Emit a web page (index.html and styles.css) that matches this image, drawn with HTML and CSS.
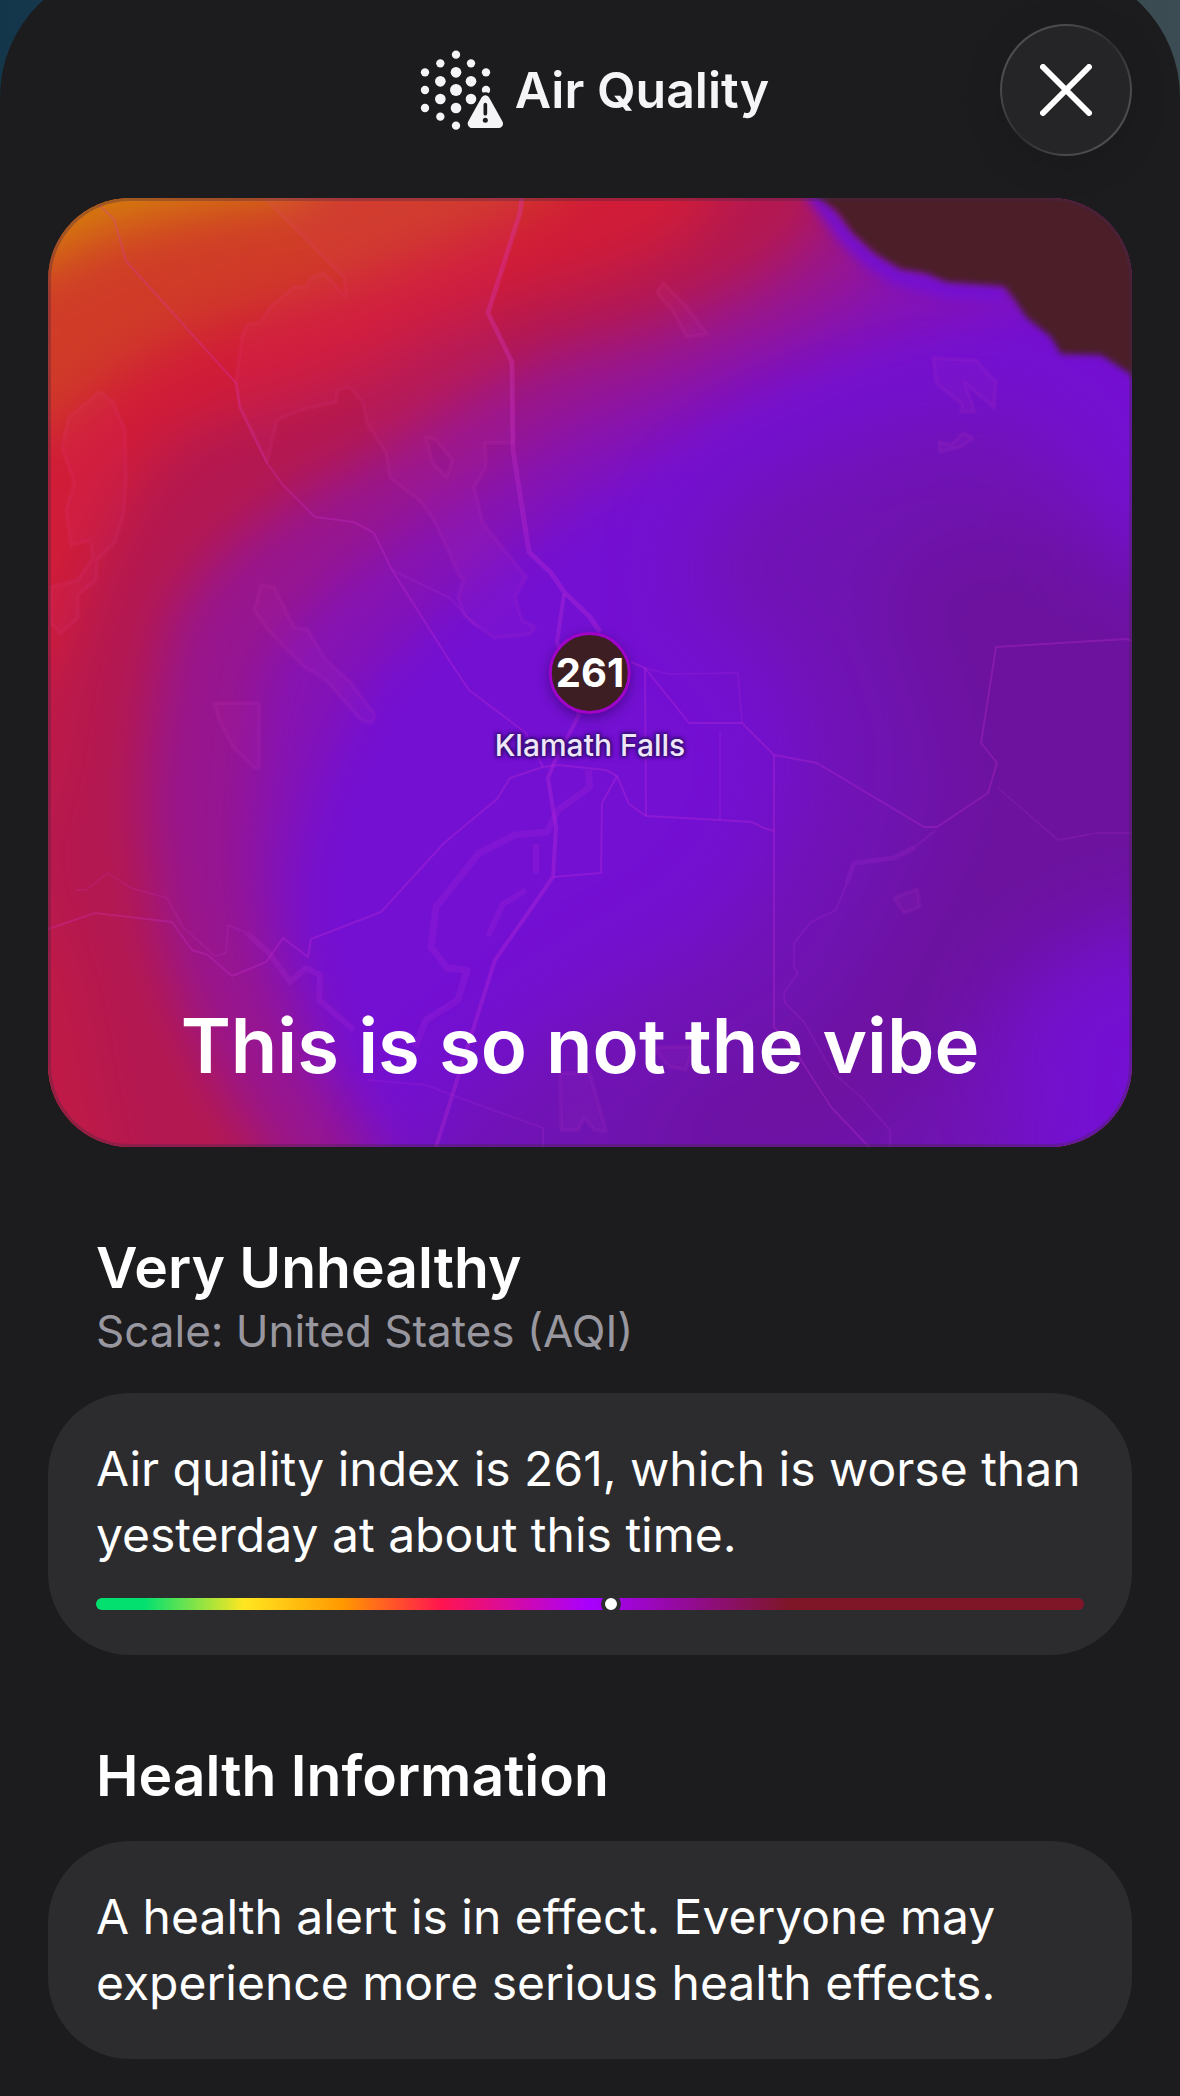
FILE: index.html
```html
<!DOCTYPE html>
<html lang="en">
<head>
  <meta charset="UTF-8">
  <meta name="viewport" content="width=device-width, initial-scale=1">
  <title>Air Quality</title>
  <link rel="stylesheet" href="styles.css">
</head>
<body>

<main class="sheet">
  <header class="sheet-header">
    <h1 class="title">
      <svg class="title-icon" viewBox="54 54 258 246" aria-hidden="true">
        <g fill="#f5f5f7">
          <circle cx="165" cy="71" r="12.5"/>
          <circle cx="118" cy="97" r="12.5"/>
          <circle cx="210" cy="97" r="12.5"/>
          <circle cx="72" cy="124" r="12.5"/>
          <circle cx="165" cy="124" r="16"/>
          <circle cx="255" cy="124" r="12.5"/>
          <circle cx="118" cy="151" r="16"/>
          <circle cx="210" cy="151" r="16"/>
          <circle cx="72" cy="177" r="12.5"/>
          <circle cx="165" cy="177" r="18"/>
          <circle cx="255" cy="177" r="12.5"/>
          <circle cx="118" cy="204" r="16"/>
          <circle cx="210" cy="204" r="16"/>
          <circle cx="72" cy="231" r="12.5"/>
          <circle cx="165" cy="231" r="16"/>
          <circle cx="118" cy="257" r="12.5"/>
          <circle cx="165" cy="284" r="12.5"/>
        </g>
        <path d="M253 206 L212 279 H294 Z" fill="#1c1c1e" stroke="#1c1c1e" stroke-width="44" stroke-linejoin="round"/>
        <path d="M253 206 L213 278 H293 Z" fill="#f5f5f7" stroke="#f5f5f7" stroke-width="26" stroke-linejoin="round"/>
        <path d="M253 221 V248" stroke="#1c1c1e" stroke-width="11" stroke-linecap="round"/>
        <circle cx="253" cy="268" r="7.5" fill="#1c1c1e"/>
      </svg>
      Air Quality
    </h1>
    <button class="close-btn" type="button" aria-label="Close">
      <svg viewBox="0 0 52 52" aria-hidden="true">
        <path d="M3 3 L49 49 M49 3 L3 49"/>
      </svg>
    </button>
  </header>

  <!-- Map with the AQI overlay -->
  <figure class="map">
    <svg class="map-art" viewBox="0 0 1084 949" preserveAspectRatio="xMidYMid slice" aria-hidden="true">
      <defs>
        <filter id="soft" filterUnits="userSpaceOnUse" x="-200" y="-200" width="1484" height="1349" color-interpolation-filters="sRGB">
          <feGaussianBlur stdDeviation="26"/>
        </filter>
        <filter id="softer" filterUnits="userSpaceOnUse" x="-200" y="-200" width="1484" height="1349" color-interpolation-filters="sRGB">
          <feGaussianBlur stdDeviation="42"/>
        </filter>
        <filter id="edge" filterUnits="userSpaceOnUse" x="-200" y="-200" width="1484" height="1349" color-interpolation-filters="sRGB">
          <feGaussianBlur stdDeviation="3"/>
        </filter>
        <filter id="fringe" filterUnits="userSpaceOnUse" x="-200" y="-200" width="1484" height="1349" color-interpolation-filters="sRGB">
          <feGaussianBlur stdDeviation="6"/>
        </filter>
      </defs>

      <!-- Overlay bands, from unhealthy to hazardous -->
      <rect width="1084" height="949" fill="#d03c28"/>
      <g filter="url(#soft)">
        <path fill="#d47c0c" d="M-150 100 L0 66 L50 36 L150 12 L260 -6 L290 -150 H-150Z"/>
        <path fill="#d01c38" d="M-150 290 L0 232 L70 176 L140 135 L213 112 L300 88 L410 44 L500 0 L640 -150 H1200 V1100 H-150Z"/>
        <path fill="#c01a46" d="M-150 1100 V500 L0 470 L35 380 L70 300 L110 245 L190 205 L213 240 V1100Z"/>
        <path fill="#b41850" d="M80 1100 L60 949 L45 880 L30 790 L-5 700 L-10 640 L15 560 L25 480 L50 380 L90 300 L130 248 L213 210 L303 178 L410 122 L500 92 L570 72 L640 38 L680 -20 L730 -150 H1200 V1100Z"/>
        <path fill="#97158e" d="M265 1100 L215 949 L175 890 L140 820 L112 740 L98 640 L98 570 L110 480 L125 415 L175 352 L252 297 L340 250 L435 190 L508 156 L600 132 L705 86 L762 45 L795 -20 L835 -150 H1200 V1100Z"/>
        <path fill="#8513b4" d="M350 1100 L312 949 L260 870 L212 755 L198 665 L205 575 L216 465 L275 395 L362 328 L440 280 L520 228 L630 182 L750 128 L815 92 L855 20 L905 -150 H1200 V1100Z"/>
        <path fill="#7410d2" d="M390 1100 L345 949 L290 870 L246 755 L246 670 L270 580 L315 485 L368 430 L445 368 L520 308 L620 248 L716 192 L840 142 L970 104 L1200 70 V1100Z"/>
      </g>
      <g filter="url(#softer)">
        <path fill="#7013b3" d="M670 310 L756 260 L880 215 L971 215 L1030 275 L1080 370 L1250 440 V715 L1078 735 L1000 770 L960 840 L970 900 L970 1100 H330 L385 930 L456 865 L560 800 L680 735 L730 660 L760 560 L720 450 L640 400Z"/>
        <path fill="#6c129e" d="M830 390 L900 330 L1000 340 L1250 440 V700 L1040 720 L930 800 L880 880 L800 960 L560 980 L640 900 L780 830 L860 700 L900 600 L870 480Z"/>
      </g>
      <path d="M762 -10 L780 14 L798 38 L820 60 L848 78 L900 92 L956 96" fill="none" stroke="#7410d2" stroke-width="16" filter="url(#fringe)"/>
      <path fill="#4b1e28" filter="url(#edge)" d="M760 -40 L771 0 L788 12 L806 36 L828 56 L853 71 L878 75 L899 84 L956 88 L967 102 L978 119 L1003 139 L1013 156 L1053 157 L1084 177 L1140 205 V-40Z"/>

      <!-- Lakes, forest and fields -->
      <g fill="#f050c8" fill-opacity=".05" stroke="#f050c8" stroke-opacity=".07" stroke-width="4" stroke-linejoin="round">
        <path fill-rule="evenodd" d="M217 0 L235 19 L249 32 L296 80 L298 99 L276 75 L263 80 L258 89 L246 89 L222 109 L213 124 L199 127 L194 139 L188 182 L192 209 L219 264 L229 222 L253 212 L288 204 L290 192 L301 189 L315 205 L319 225 L338 255 L342 280 L371 302 L385 320 L410 375 L415 382 L410 400 L417 419 L446 440 L483 436 L487 429 L474 422 L467 399 L478 379 L435 325 L426 289 L438 269 L437 245 L465 245 L464 164 L440 115 L472 15 L474 0Z M378 239 L388 242 L404 262 L399 279 L385 265Z"/>
        <path d="M51 194 L65 204 L77 232 L78 279 L76 315 L67 344 L49 362 L48 382 L30 397 L30 420 L13 435 L3 425 L3 389 L30 382 L45 359 L42 342 L23 347 L18 312 L26 285 L14 249 L21 219Z"/>
        <path d="M213 387 L226 389 L246 429 L260 432 L278 462 L303 485 L327 517 L324 525 L313 522 L278 482 L256 469 L220 432 L206 412Z"/>
        <path d="M166 505 H211 V569 L206 570 L185 549 L171 522Z"/>
        <path d="M615 85 L637 107 L659 136 L639 139 L624 112 L609 95Z"/>
        <path d="M885 160 L928 162 L948 184 L946 210 L917 185 L927 214 L913 214 L914 206 L888 185Z"/>
        <path d="M891 244 L903 247 L915 235 L925 240 L913 249 L892 254Z"/>
        <path d="M846 700 L869 691 L872 709 L856 715Z"/>
        <path d="M512 875 L513 932 H530 L536 920 L546 932 L558 933 L542 875Z"/>
        <path d="M605 849 H645 L638 872 L620 868Z"/>
      </g>

      <!-- Rivers -->
      <g fill="none" stroke="#d040e0" stroke-opacity=".13" stroke-linejoin="round">
        <path stroke-width="7" d="M540 572 L542 589 L510 612 L499 634 L467 637 L431 655 L388 709 L383 749 L399 770 L419 772 L410 802 L378 822 L367 849"/>
        <path stroke-width="6" d="M488 646 V676 M478 692 L455 706 L440 738"/>
        <path stroke-width="2" d="M28 692 L38 692 L60 675 L83 690 L119 700 L135 729 L167 758 L178 755 L180 727 L199 735"/>
        <path stroke-width="6" d="M199 735 L221 755 L242 784 L258 770 L272 777 L271 802 L306 832"/>
        <path stroke-width="5" d="M867 649 L846 660 L806 665 L799 685"/>
        <path stroke-width="2" d="M888 632 L867 649 M799 685 L788 712 L763 724 L746 745 L746 769 L750 775 L736 795 L737 805 L756 824 L785 875 L813 899 L842 932 V949"/>
        <path stroke-width="2" d="M949 589 L1010 642 L1049 635 L1084 635 M344 372 L402 400 L430 430 M320 882 L378 887 L420 903 L495 930 V949"/>
        <path stroke-width="2" d="M597 470 L620 476 L690 475 L694 525 M672 533 V623"/>
      </g>

      <!-- Roads -->
      <g fill="none" stroke="#d838d8" stroke-opacity=".24" stroke-linejoin="round">
        <path stroke-width="5" d="M474 0 L472 15 L440 115 L464 164 L465 252 L481 354 L503 375 L517 395 L542 419 L552 434"/>
        <path stroke-width="4" d="M516 396 L509 444 L531 517 L506 565 L500 580 L508 629 L505 679 L447 762 L388 949"/>
        <path stroke-width="2" d="M51 7 L66 21 L78 63 L188 185 L192 210 L219 265 L235 287 L267 319 L306 324 L326 335 L344 372 L403 465 L421 492 L478 535 L495 569"/>
        <path stroke-width="2" d="M0 731 L47 715 L124 724 L144 752 L160 757 L184 778 L218 764 L235 740 L260 759 L263 741 L333 714 L396 645 L449 601 L462 580 L495 569 L510 567 L558 572 L569 578 L581 606 L598 618 L672 622 L704 624 L716 630 L726 633"/>
        <path stroke-width="2" d="M583 464 L597 470 L641 525 L694 525 L726 557 L769 565 L876 629 L889 629 L940 595 L949 565 L933 545 L946 462 L948 449 L1078 441 L1084 443"/>
        <path stroke-width="2" d="M726 557 V829 L751 859 L783 909 L821 949 M597 470 L598 618 M569 578 L554 605 L553 675 L505 679"/>
      </g>
    </svg>

    <div class="pin">
      <span class="pin-value">261</span>
      <span class="pin-label">Klamath Falls</span>
    </div>

    <figcaption class="caption">This is so not the vibe</figcaption>
  </figure>

  <section class="section">
    <div class="section-head">
      <h2>Very Unhealthy</h2>
      <p class="scale">Scale: United States (AQI)</p>
    </div>
    <div class="card">
      <p>Air quality index is 261, which is worse than yesterday at about this time.</p>
      <div class="aqi-bar" role="meter" aria-label="Air quality index" aria-valuemin="0" aria-valuemax="500" aria-valuenow="261">
        <span class="aqi-dot" style="left: 52.1%"></span>
      </div>
    </div>
  </section>

  <section class="section">
    <div class="section-head">
      <h2>Health Information</h2>
    </div>
    <div class="card">
      <p>A health alert is in effect. Everyone may experience more serious health effects.</p>
    </div>
  </section>
</main>

</body>
</html>
```
FILE: styles.css
```css
* {
  box-sizing: border-box;
}

body {
  margin: 0;
  overflow-x: hidden;
  background: linear-gradient(90deg, #14364b, #3b4c52);
  color: #fff;
  font-family: Inter, "Liberation Sans", sans-serif;
}

h1, h2, p, figure {
  margin: 0;
}

/* The sheet slides up past the top edge of the window */
.sheet {
  min-height: calc(100vh + 33px);
  margin-top: -33px;
  padding: 57px 48px 38px;
  border-radius: 130px 130px 0 0;
  background-color: #1c1c1e;
}

.sheet-header {
  display: grid;
  grid-template-columns: 1fr auto 1fr;
  align-items: center;
  margin-bottom: 42px;
}

.title {
  grid-column: 2;
  display: flex;
  align-items: center;
  gap: 10px;
  padding-left: 8px;
  color: #f5f5f7;
  font-size: 50px;
  font-weight: 600;
  line-height: 60px;
}

.title-icon {
  width: 86px;
  height: 82px;
}

.close-btn {
  justify-self: end;
  display: flex;
  align-items: center;
  justify-content: center;
  width: 132px;
  height: 132px;
  padding: 0;
  border: 2px solid transparent;
  border-radius: 50%;
  background:
    linear-gradient(#252527, #252527) padding-box,
    linear-gradient(135deg, #55545a, #4a494e 25%, #2e2e31 50%, #4a494e 75%, #55545a) border-box;
  box-shadow: 0 8px 40px rgba(0, 0, 0, 0.12);
  cursor: pointer;
}

.close-btn svg {
  width: 52px;
  height: 52px;
}

.close-btn path {
  fill: none;
  stroke: #fff;
  stroke-width: 6;
  stroke-linecap: round;
}

/* Map */
.map {
  position: relative;
  border-radius: 82px;
  overflow: hidden;
}

.map-art {
  display: block;
  width: 100%;
  height: auto;
}

.map::after {
  content: "";
  position: absolute;
  inset: 0;
  border: 3px solid rgba(70, 40, 70, 0.35);
  border-radius: 82px;
}

.pin {
  position: absolute;
  top: 50%;
  left: 50%;
  display: flex;
  flex-direction: column;
  align-items: center;
  gap: 12px;
  margin-top: -41px;
  transform: translateX(-50%);
}

.pin-value {
  width: 82px;
  height: 82px;
  border: 3px solid #a004c8;
  border-radius: 50%;
  background-color: #3d1e23;
  box-shadow: 0 4px 12px rgba(40, 0, 90, 0.5);
  font-size: 40px;
  font-weight: 700;
  line-height: 76px;
  text-align: center;
}

.pin-label {
  color: #f0e6fa;
  font-size: 30px;
  font-weight: 500;
  line-height: 38px;
  white-space: nowrap;
  text-shadow: 0 0 3px #32106e, 0 0 3px #32106e, 0 0 5px #32106e, 0 0 5px #32106e;
}

.caption {
  position: absolute;
  right: 20px;
  bottom: 54px;
  left: 0;
  font-size: 76px;
  font-weight: 600;
  line-height: 96px;
  text-align: center;
}

/* Text sections */
.section {
  padding-top: 86px;
}

.section-head {
  padding: 0 48px 30px;
}

.section-head h2 {
  font-size: 57px;
  font-weight: 600;
  line-height: 70px;
}

.scale {
  margin-bottom: 4px;
  color: #98979f;
  font-size: 44px;
  line-height: 56px;
}

.card {
  padding: 43px 48px;
  border-radius: 82px;
  background-color: #2c2c2f;
  font-size: 48px;
  line-height: 66px;
}

.aqi-bar {
  position: relative;
  height: 12px;
  margin: 30px 0 2px;
  border-radius: 6px;
  background: linear-gradient(90deg, #04e070 5%, #ffe620 15%, #ff9800 25%, #ff1450 35%, #a800ff 50%, #7e1628 70%);
}

.aqi-dot {
  position: absolute;
  top: 50%;
  width: 20px;
  height: 20px;
  border: 4px solid #2c2c2f;
  border-radius: 50%;
  background-color: #fff;
  transform: translate(-50%, -50%);
}
```
